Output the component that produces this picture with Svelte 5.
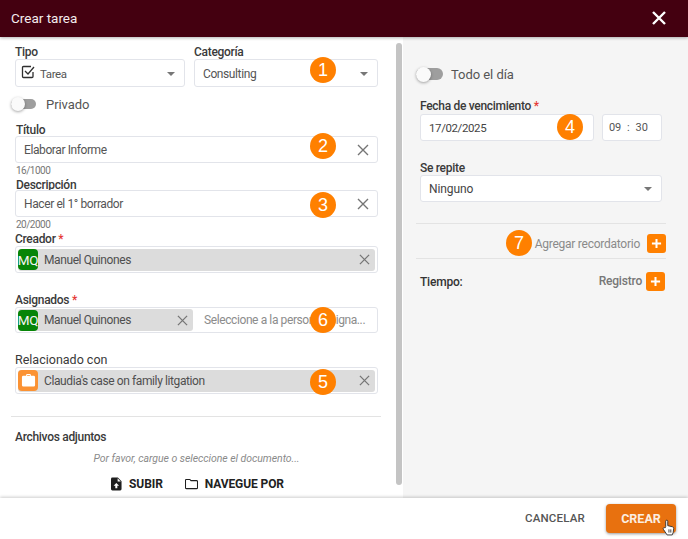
<script>
  const closeIcon = 'M6 6l12 12M18 6L6 18';
</script>

{#snippet badge(n, cls)}
  <span class="badge {cls}">{n}</span>
{/snippet}

{#snippet clearIcon()}
  <svg class="clear" viewBox="0 0 12 12" width="12" height="12"><path d="M1 1l10 10M11 1L1 11" /></svg>
{/snippet}

{#snippet caret()}
  <span class="caret"></span>
{/snippet}

{#snippet avatar()}
  <span class="avatar">MQ</span>
{/snippet}

{#snippet plus()}
  <svg viewBox="0 0 12 12" width="11" height="11"><path d="M6 1v10M1 6h10" /></svg>
{/snippet}

<div class="dialog">
  <header class="head">
    <h1>Crear tarea</h1>
    <svg class="close" viewBox="0 0 24 24" width="24" height="24"><path d={closeIcon} /></svg>
  </header>

  <main class="body">
    <section class="left">
      <div class="scrollbar"></div>

      <div class="row-two">
        <div class="tipo">
          <div class="label">Tipo</div>
          <div class="box select tipo-box">
            <svg class="check" viewBox="0 0 14 14" width="14" height="14">
              <path d="M12 7v4.500a1 1 0 0 1-1 1H2.500a1 1 0 0 1-1-1v-9a1 1 0 0 1 1-1H10" />
              <path d="M4 6l3 3 6-7" />
            </svg>
            <span class="small">Tarea</span>
            {@render caret()}
          </div>
        </div>
        <div class="cat">
          <div class="label">Categoría</div>
          <div class="box select">
            <span>Consulting</span>
            {@render caret()}
            {@render badge(1, 'b1')}
          </div>
        </div>
      </div>

      <div class="toggle-row privado">
        <span class="toggle"></span>
        <span>Privado</span>
      </div>

      <div class="label titulo">Título</div>
      <div class="box input">
        <span>Elaborar Informe</span>
        {@render clearIcon()}
        {@render badge(2, 'b2')}
      </div>
      <div class="counter">16/1000</div>

      <div class="label desc">Descripción</div>
      <div class="box input">
        <span>Hacer el 1° borrador</span>
        {@render clearIcon()}
        {@render badge(3, 'b3')}
      </div>
      <div class="counter">20/2000</div>

      <div class="label creador">Creador <em>*</em></div>
      <div class="box chips">
        <div class="chip full">
          {@render avatar()}
          <span>Manuel Quinones</span>
          {@render clearIcon()}
        </div>
      </div>

      <div class="label asignados">Asignados <em>*</em></div>
      <div class="box chips short">
        <div class="chip half">
          {@render avatar()}
          <span>Manuel Quinones</span>
          {@render clearIcon()}
        </div>
        <span class="placeholder">Seleccione a la persona asigna...</span>
        {@render badge(6, 'b6')}
      </div>

      <div class="label relacionado">Relacionado con</div>
      <div class="box chips">
        <div class="chip full">
          <span class="avatar case">
            <svg viewBox="0 0 16 16" width="15" height="15">
              <path d="M5.500 3V2a1 1 0 0 1 1-1h3a1 1 0 0 1 1 1v1h3a1.500 1.500 0 0 1 1.500 1.500V13a1.500 1.500 0 0 1-1.500 1.500h-11A1.500 1.500 0 0 1 1 13V4.500A1.500 1.500 0 0 1 2.500 3zm1 0h3V2h-3z" fill-rule="evenodd" />
            </svg>
          </span>
          <span>Claudia's case on family litgation</span>
          {@render clearIcon()}
        </div>
        {@render badge(5, 'b3')}
      </div>

      <hr class="rule-left" />

      <div class="label adjuntos">Archivos adjuntos</div>
      <div class="hint">Por favor, cargue o seleccione el documento...</div>
      <div class="uploads">
        <span class="upload">
          <svg viewBox="0 0 12 14" width="11" height="14">
            <path d="M1.500 0H7.500L11.500 4V12.500A1.500 1.500 0 0 1 10 14H1.500A1.500 1.500 0 0 1 0 12.500V1.500A1.500 1.500 0 0 1 1.500 0z" />
            <path d="M7.200 .8V4.300H10.700z" fill="#fff" />
            <path d="M5.800 5.800L8.800 8.800H6.900V11.500H4.700V8.800H2.800z" fill="#fff" />
          </svg>
          SUBIR
        </span>
        <span class="upload">
          <svg viewBox="0 0 14 12" width="13" height="12">
            <path d="M1.500 1.100H5.200L6.500 2.400H12.500A1 1 0 0 1 13.500 3.400V10A1 1 0 0 1 12.500 11H1.500A1 1 0 0 1 .5 10V2.100A1 1 0 0 1 1.500 1.100z" fill="none" stroke="#1f1f1f" stroke-width="1.200" />
          </svg>
          NAVEGUE POR
        </span>
      </div>
    </section>

    <section class="right">
      <div class="toggle-row todo">
        <span class="toggle"></span>
        <span>Todo el día</span>
      </div>

      <div class="pad">
        <div class="label fecha">Fecha de vencimiento <em>*</em></div>
        <div class="date-row">
          <div class="box input date">
            <span class="dark">17/02/2025</span>
            {@render badge(4, 'b4')}
          </div>
          <div class="box time"><span>09</span><b>:</b><span>30</span></div>
        </div>

        <div class="label repite">Se repite</div>
        <div class="box select repeat">
          <span class="dark">Ninguno</span>
          {@render caret()}
        </div>
      </div>

      <hr class="rule-right first" />
      <div class="reminder">
        {@render badge(7, 'b7')}
        <span>Agregar recordatorio</span>
        <span class="plus">{@render plus()}</span>
      </div>
      <hr class="rule-right" />

      <div class="tiempo">
        <strong>Tiempo:</strong>
        <span class="registro">Registro</span>
        <span class="plus">{@render plus()}</span>
      </div>
    </section>
  </main>

  <footer class="foot">
    <span class="cancel">CANCELAR</span>
    <span class="create">
      CREAR
      <svg class="cursor" viewBox="0 0 14 18" width="13" height="17">
        <path d="M4 8V2.200a1.100 1.100 0 0 1 2.200 0V7l5 1.200c1 .3 1.500 1 1.400 2l-.6 4.300-1 2.500H5.500L1.500 11c-.9-1.300.7-2.600 1.800-1.500z" />
        <path d="M7.500 11v3.500M9.500 11v3.500" />
      </svg>
    </span>
  </footer>
</div>

<style>
  :global(body) {
    margin: 0;
    background: #fff;
  }
  .dialog {
    position: relative;
    width: 688px;
    height: 539px;
    overflow: hidden;
    display: flex;
    flex-direction: column;
    font-family: Roboto, "Liberation Sans", sans-serif;
    font-size: 12px;
    letter-spacing: -.4px;
    color: #4a4a4a;
  }
  .head {
    height: 37px;
    flex: none;
    background: #440010;
    display: flex;
    align-items: center;
    justify-content: space-between;
    padding: 0 17px 2px 11px;
    box-sizing: border-box;
    box-shadow: 0 1px 3px rgba(0, 0, 0, .3);
    position: relative;
    z-index: 2;
  }
  .head h1 {
    margin: 0;
    font-size: 13.500px;
    font-weight: 400;
    letter-spacing: 0;
    color: #f3eced;
  }
  .close path {
    fill: none;
    stroke: #fff;
    stroke-width: 2.400;
  }
  .body {
    flex: 1;
    display: flex;
    min-height: 0;
  }
  .left {
    position: relative;
    width: 403px;
    flex: none;
    box-sizing: border-box;
    padding: 8px 25px 0 15px;
    background: #fff;
  }
  .scrollbar {
    position: absolute;
    top: 6px;
    right: 1px;
    bottom: 13px;
    width: 6px;
    border-radius: 3px;
    background: #c4c4c4;
  }
  .right {
    flex: 1;
    background: #f5f5f5;
    padding: 28px 22px 0 13px;
  }
  .pad {
    padding: 0 4px;
  }
  .label {
    font-size: 12px;
    font-weight: 500;
    letter-spacing: -.3px;
    line-height: 14px;
    color: #3a3a3a;
  }
  .label em {
    color: #e53935;
    font-style: normal;
  }
  .row-two {
    display: flex;
    gap: 9px;
  }
  .tipo {
    width: 170px;
  }
  .cat {
    flex: 1;
  }
  .box {
    position: relative;
    display: flex;
    align-items: center;
    box-sizing: border-box;
    background: #fff;
    border: 1px solid #e2e4ea;
    border-radius: 3px;
    height: 27px;
  }
  .select {
    height: 28px;
    padding: 1px 8px 0;
    color: #555;
  }
  .tipo-box {
    padding-left: 5px;
  }
  .small {
    font-size: 11.500px;
    margin-left: 5px;
  }
  .check {
    margin-top: -3px;
  }
  .check path {
    fill: none;
    stroke: #2f2f2f;
    stroke-width: 1.300;
  }
  .caret {
    margin-left: auto;
    margin-right: 1px;
    width: 0;
    height: 0;
    border-left: 4.500px solid transparent;
    border-right: 4.500px solid transparent;
    border-top: 4.500px solid #777;
  }
  .toggle-row {
    display: flex;
    align-items: center;
    font-size: 13px;
    letter-spacing: -.05px;
    color: #555;
  }
  .privado {
    margin: 8px 0 0 -4px;
    height: 18px;
    gap: 10px;
  }
  .todo {
    height: 18px;
    gap: 8px;
  }
  .toggle {
    position: relative;
    display: block;
    width: 25px;
    height: 10px;
    border-radius: 5px;
    background: #9e9e9e;
    flex: none;
  }
  .toggle::before {
    content: "";
    position: absolute;
    left: 0;
    top: -2px;
    width: 14px;
    height: 14px;
    border-radius: 50%;
    background: #fafafa;
    box-shadow: 0 1px 3px rgba(0, 0, 0, .35);
  }
  .todo .toggle {
    width: 27px;
    height: 12px;
    border-radius: 6px;
  }
  .todo .toggle::before {
    width: 15px;
    height: 15px;
    top: -1.500px;
  }
  .titulo {
    margin: 10px 0 -1px 1px;
  }
  .input {
    padding: 0 8px;
    color: #555;
  }
  .input :global(.clear) {
    margin-left: auto;
  }
  .clear {
    flex: none;
  }
  .clear path {
    fill: none;
    stroke: #757575;
    stroke-width: 1.400;
  }
  .counter {
    font-size: 10px;
    letter-spacing: -.5px;
    line-height: 13px;
    color: #777;
    margin: 1px 0 0 1px;
  }
  .desc {
    margin: 1px 0 -2px 1px;
  }
  .creador {
    margin-top: 1px;
  }
  .chips {
    padding: 0 2px;
  }
  .chips.short {
    height: 26px;
  }
  .chip {
    display: flex;
    align-items: center;
    gap: 6px;
    height: 22px;
    box-sizing: border-box;
    background: #dcdcdc;
    border-radius: 3px;
    padding-right: 5px;
    color: #4f4f4f;
  }
  .chip :global(.clear) {
    margin-left: auto;
    width: 11px;
    height: 11px;
  }
  .chip.full {
    flex: 1;
  }
  .chip.half {
    width: 175px;
    flex: none;
  }
  .avatar {
    width: 20px;
    height: 21px;
    border-radius: 4px;
    background: #078507;
    color: #f4f4f4;
    display: flex;
    align-items: center;
    justify-content: center;
    font-size: 13.500px;
    flex: none;
    overflow: hidden;
  }
  .avatar.case {
    background: #fb9233;
  }
  .avatar.case path {
    fill: #fff;
  }
  .placeholder {
    margin-left: 11px;
    white-space: nowrap;
    color: #8c8c8c;
  }
  .asignados {
    margin-top: 20px;
  }
  .relacionado {
    margin: 20px 0 0;
    font-size: 12.500px;
    font-weight: 400;
    letter-spacing: 0;
  }
  hr {
    border: 0;
    height: 1px;
    background: #e3e3e3;
    margin: 0;
  }
  .rule-left {
    margin: 22px -3px 0 -4px;
  }
  .adjuntos {
    margin-top: 13px;
  }
  .hint {
    margin-top: 8px;
    text-align: center;
    font-style: italic;
    font-size: 10.500px;
    letter-spacing: -.05px;
    line-height: 14px;
    color: #8a8a8a;
  }
  .uploads {
    display: flex;
    justify-content: center;
    gap: 22px;
    margin-top: 11px;
    margin-left: 2px;
  }
  .upload {
    display: flex;
    align-items: center;
    gap: 7px;
    font-size: 12px;
    font-weight: 700;
    letter-spacing: -.1px;
    color: #222;
  }
  .upload svg {
    fill: #1f1f1f;
  }
  .fecha {
    margin-top: 16px;
  }
  .date-row {
    display: flex;
    gap: 8px;
    margin-top: 1px;
  }
  .date {
    width: 174px;
    flex: none;
    padding: 0 8px;
    font-size: 11.500px;
  }
  .dark {
    color: #444;
  }
  .time {
    width: 60px;
    flex: none;
    padding-left: 6px;
    gap: 6px;
    font-size: 11px;
    letter-spacing: -.15px;
    color: #555;
  }
  .time b {
    font-weight: 400;
  }
  .repite {
    margin: 20px 0 0;
  }
  .repeat {
    height: 27px;
  }
  .repeat .dark {
    letter-spacing: -.1px;
  }
  .first {
    margin-top: 21px;
  }
  .reminder {
    height: 34px;
    padding-top: 5px;
    box-sizing: border-box;
    display: flex;
    align-items: center;
    justify-content: flex-end;
    gap: 7px;
    color: #8a8a8a;
    letter-spacing: -.25px;
    position: relative;
  }
  .plus {
    width: 19px;
    height: 19px;
    border-radius: 3px;
    background: #ff8000;
    display: flex;
    align-items: center;
    justify-content: center;
    flex: none;
  }
  .plus path {
    stroke: #fff;
    stroke-width: 2.200;
    fill: none;
  }
  .tiempo {
    display: flex;
    align-items: center;
    margin-top: 13px;
    padding: 0 1px 0 4px;
    letter-spacing: -.2px;
  }
  .tiempo strong {
    font-weight: 500;
    color: #333;
    flex: 1;
  }
  .registro {
    margin-right: 4px;
    font-weight: 500;
    color: #777;
    position: relative;
    top: -1px;
  }
  .foot {
    height: 41px;
    flex: none;
    background: #fff;
    display: flex;
    align-items: center;
    justify-content: flex-end;
    padding: 0 12px 1px 0;
    box-sizing: border-box;
    gap: 21px;
    box-shadow: 0 -1px 3px rgba(0, 0, 0, .2);
    position: relative;
    z-index: 2;
  }
  .cancel {
    font-size: 11.500px;
    font-weight: 500;
    letter-spacing: .2px;
    color: #555;
  }
  .create {
    position: relative;
    width: 70px;
    height: 29px;
    border-radius: 4px;
    background: #e8710f;
    color: #fbeee2;
    font-size: 12.500px;
    font-weight: 700;
    letter-spacing: 0;
    display: flex;
    align-items: center;
    justify-content: center;
    box-shadow: 0 1px 3px rgba(0, 0, 0, .4);
  }
  .cursor {
    position: absolute;
    left: 56px;
    top: 15px;
  }
  .cursor path {
    fill: #fff;
    stroke: #333;
    stroke-width: 1;
  }
  .badge {
    position: absolute;
    width: 26px;
    height: 26px;
    border-radius: 50%;
    background: #ff8000;
    color: #fff;
    font-family: "Liberation Sans", sans-serif;
    font-size: 18px;
    letter-spacing: 0;
    display: flex;
    align-items: center;
    justify-content: center;
    z-index: 1;
  }
  .b1 {
    left: 115px;
    top: -3px;
  }
  .b2 {
    left: 294px;
    top: -4px;
  }
  .b3 {
    left: 294px;
    top: 1px;
  }
  .b6 {
    left: 294px;
    top: -1px;
  }
  .b4 {
    left: 136px;
    top: -1px;
  }
  .b7 {
    left: 90px;
    top: 6px;
  }
</style>
